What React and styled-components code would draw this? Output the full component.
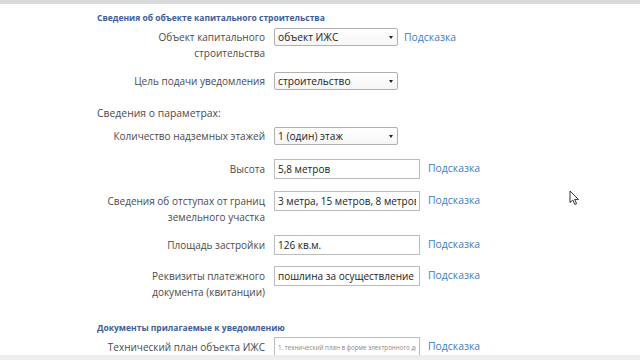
import React from 'react';
import styled, { createGlobalStyle } from 'styled-components';

const GlobalStyle = createGlobalStyle`
  html, body {
    margin: 0;
    padding: 0;
    background: #fff;
    font-family: "Open Sans", "Noto Sans", "Liberation Sans", sans-serif;
    overflow: hidden;
  }
`;

const Page = styled.div`
  position: relative;
  width: 640px;
  height: 360px;
  overflow: hidden;
  background: #fff;
  border-top: 4px solid #dadada;
  box-sizing: border-box;
`;

const Form = styled.div`
  padding: 7px 0 0 97px;
`;

const SectionTitle = styled.div`
  font-size: 8.5px;
  font-weight: 700;
  line-height: 14px;
  color: #3d5c9c;
  margin-bottom: ${p => p.mb || 0}px;
`;

const SubTitle = styled.div`
  font-size: 10.4px;
  line-height: 16px;
  color: #4a4a4a;
  margin: ${p => p.mt || 0}px 0 ${p => p.mb || 0}px;
`;

const Row = styled.div`
  display: flex;
  align-items: flex-start;
  min-height: 20px;
  margin-bottom: ${p => (p.mb === undefined ? 11 : p.mb)}px;
`;

const Label = styled.div`
  flex: 0 0 168px;
  margin-right: 9px;
  text-align: right;
  white-space: nowrap;
  font-size: 10px;
  line-height: 16px;
  color: #4a4a4a;
  padding-top: ${p => p.pt || 1}px;
`;

const Select = styled.div`
  box-sizing: border-box;
  width: 124px;
  height: 18px;
  border: 1px solid #b0b0b0;
  border-radius: 2px;
  background: linear-gradient(#fff, #f6f6f6);
  display: flex;
  align-items: center;
  justify-content: space-between;
  padding: 0 4px 0 3px;
  font-size: 10.2px;
  color: #222;
`;

const Arrow = styled.span`
  width: 0;
  height: 0;
  border-left: 2px solid transparent;
  border-right: 2px solid transparent;
  border-top: 3px solid #222;
`;

const Input = styled.input`
  box-sizing: border-box;
  width: 146px;
  height: 20px;
  border: 1px solid #bcbcbc;
  padding: 0 3px;
  margin: 0;
  font-family: inherit;
  font-size: ${p => (p.small ? 6.2 : 10)}px;
  color: ${p => (p.small ? '#888' : '#222')};
  background: #fff;
  outline: none;
`;

const Hint = styled.a`
  font-size: 10.4px;
  line-height: 16px;
  color: #3c7dc0;
  text-decoration: none;
  margin-left: ${p => p.ml}px;
  padding-top: 1px;
  white-space: nowrap;
`;

const Cursor = styled.svg`
  position: absolute;
  left: 569px;
  top: 186px;
`;

const BottomFade = styled.div`
  position: absolute;
  left: 0;
  right: 0;
  bottom: 0;
  height: 5px;
  background: rgba(236, 236, 236, 0.9);
`;

const SelectRow = ({ label, value, hint, pt, mb }) => (
  <Row mb={mb}>
    <Label pt={pt}>{label}</Label>
    <Select>
      <span>{value}</span>
      <Arrow />
    </Select>
    {hint && <Hint ml={6}>Подсказка</Hint>}
  </Row>
);

const InputRow = ({ label, value, small, pt, mb }) => (
  <Row mb={mb}>
    <Label pt={pt || 2}>{label}</Label>
    <Input readOnly value={value} small={small} />
    <Hint ml={8}>Подсказка</Hint>
  </Row>
);

export default function App() {
  return (
    <Page>
      <GlobalStyle />
      <Form>
        <SectionTitle mb={3}>Сведения об объекте капитального строительства</SectionTitle>
        <SelectRow
          label={<>Объект капитального<br />строительства</>}
          value="объект ИЖС"
          hint
        />
        <SelectRow label="Цель подачи уведомления" value="строительство" mb={0} />
        <SubTitle mt={13} mb={6}>Сведения о параметрах:</SubTitle>
        <SelectRow label="Количество надземных этажей" value="1 (один) этаж" mb={12} />
        <InputRow label="Высота" value="5,8 метров" mb={12} />
        <InputRow
          label={<>Сведения об отступах от границ<br />земельного участка</>}
          value="3 метра, 15 метров, 8 метров, 16 метров"
          mb={10}
        />
        <InputRow label="Площадь застройки" value="126 кв.м." />
        <InputRow
          label={<>Реквизиты платежного<br />документа (квитанции)</>}
          value="пошлина за осуществление государственной"
          mb={21}
        />
        <SectionTitle mb={2}>Документы прилагаемые к уведомлению</SectionTitle>
        <InputRow
          label={<>Технический план объекта ИЖС<br />или сводного плана в форме</>}
          value="1. технический план в форме электронного документа"
          small
        />
      </Form>
      <Cursor width="12" height="16" viewBox="0 0 12 16">
        <path d="M1 1 L1 12.5 L3.8 10 L5.8 14.5 L7.6 13.7 L5.7 9.4 L9.5 9.4 Z" fill="#fff" stroke="#333" strokeWidth="1" strokeLinejoin="round" />
      </Cursor>
      <BottomFade />
    </Page>
  );
}
